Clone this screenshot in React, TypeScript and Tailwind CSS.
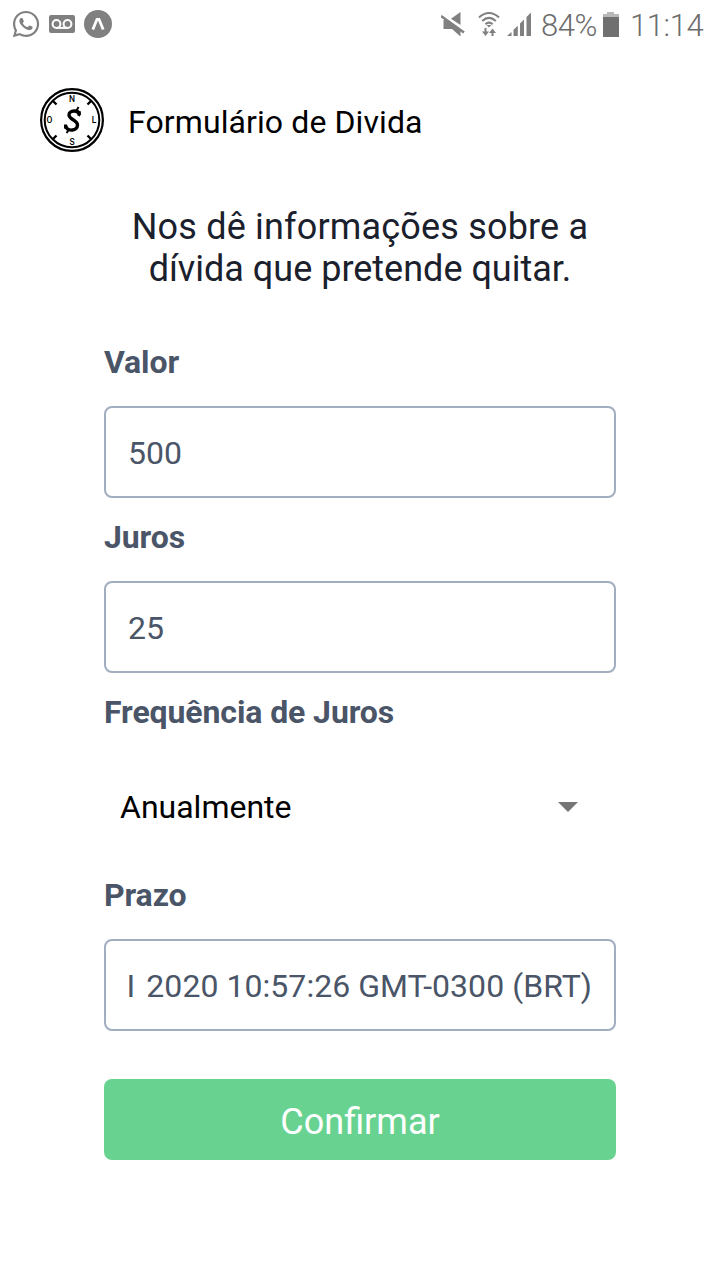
import React from "react";
import type { ReactNode } from "react";
import { FaWhatsapp } from "react-icons/fa";

function StatusBar() {
  return (
    <div className="flex h-12 items-center justify-between pl-[11px] pr-4 text-[#808080]">
      <div className="flex items-center gap-[9px]">
        <FaWhatsapp className="size-[30px]" />
        <svg className="-ml-px" width="26" height="18" viewBox="0 0 26 18" fill="none">
          <rect width="26" height="18" rx="2" fill="#808080" />
          <g stroke="#fff" strokeWidth="2">
            <circle cx="7.500" cy="9" r="3.900" />
            <circle cx="18.500" cy="9" r="3.900" />
            <path d="M7.500 12.900h11" />
          </g>
        </svg>
        <svg width="28" height="28" viewBox="0 0 28 28" fill="none">
          <circle cx="14" cy="14" r="14" fill="#808080" />
          <path d="M8.800 19.500 13 9.300h2L19.200 19.500" stroke="#fff" strokeWidth="2.800" />
        </svg>
      </div>
      <div className="flex items-center">
        <svg width="25" height="25" viewBox="0 0 25 25" fill="#808080">
          <path d="M19.500 0v13L10 6.800Z" />
          <path d="M2.500 8h4l13 9.500v7L11 17H2.500Z" />
          <path d="m0 4 23 16.500" stroke="#808080" strokeWidth="2.600" />
        </svg>
        <svg className="ml-[12px]" width="22" height="25" viewBox="0 0 22 25" fill="none" stroke="#808080" strokeWidth="2">
          <path d="M1 5.500Q11-3.500 21 5.500M4.200 9Q11 2.800 17.800 9M7.400 12.300Q11 9 14.600 12.300" />
          <path d="m8.500 13 2.500 2.500 2.500-2.500Z" fill="#808080" stroke="none" />
          <path d="M7.500 16v5M14.500 24v-5" />
          <path d="M4 19.500h7l-3.500 4.500ZM11 21h7l-3.500-4.500Z" fill="#808080" stroke="none" />
        </svg>
        <svg className="ml-[7px]" width="25" height="24" viewBox="0 0 25 24" fill="#808080">
          <path d="M0 24l4.500-4V24ZM6.500 17.800l4.300-4V24H6.500ZM13 11.500l4-4V24h-4ZM19.500 5l4.500-4.500V24h-4.500Z" />
        </svg>
        <span className="ml-[9px] w-[56px] whitespace-nowrap pt-0.5 text-[31px] font-light leading-none tracking-[-0.5px] text-[#6c6c6c]">84%</span>
        <svg className="ml-[6px]" width="16" height="25" viewBox="0 0 16 25">
          <path d="M0 2h4V0h7v2h5v4H0Z" fill="#b8b8b8" />
          <path d="M0 5h16v20H0Z" fill="#707070" />
        </svg>
        <span className="ml-[11px] w-[74px] whitespace-nowrap pt-0.5 text-[31px] font-light leading-none tracking-[-0.4px] text-[#6c6c6c]">11:14</span>
      </div>
    </div>
  );
}

function CompassLogo() {
  return (
    <svg width="64" height="64" viewBox="0 0 64 64" fill="none" stroke="#000">
      <circle cx="32" cy="32" r="30.900" strokeWidth="2.200" />
      <circle cx="32" cy="32" r="27.300" strokeWidth="2" />
      <path d="m12.500 12.500 4 4M51.500 12.500l-4 4M12.500 51.500l4-4M51.500 51.500l-4-4" strokeWidth="2.400" />
      <path d="M39.500 27C38.500 21.500 29 22 29 27c0 4.500 8.500 5 8.500 10 0 5.500-9.500 7.500-12 1" strokeWidth="3.400" />
      <path d="m36 23.500 2.500-4.500M29.500 41 26.500 45" strokeWidth="2" />
      <path d="m38 22.500 3 1-1 5-2.500-1ZM24 36.500l3 0 1 4.500-4-.500Z" fill="#000" stroke="none" />
      <g fill="#000" stroke="none" fontFamily="Roboto, sans-serif" fontSize="8.500" fontWeight="500" textAnchor="middle">
        <text x="32" y="14">N</text>
        <text x="9.500" y="35">O</text>
        <text x="54" y="35">L</text>
        <text x="32" y="57">S</text>
      </g>
    </svg>
  );
}

function Field({ label, children }: { label: string; children: ReactNode }) {
  return (
    <div>
      <div className="h-[38px] text-[32px] font-bold leading-[38px] tracking-[-0.1px]">{label}</div>
      <div className="mt-[25px] flex h-[92px] items-center rounded-lg border-2 border-[#a0aec0] px-[22px] pt-[2px] text-[32px]">
        {children}
      </div>
    </div>
  );
}

export default function App() {
  return (
    <div className="h-[1280px] overflow-hidden bg-white font-['Roboto',sans-serif]">
      <StatusBar />
      <header className="mt-10 flex h-16 items-center gap-6 pl-10 text-[32px] text-black">
        <CompassLogo />
        <h1 className="pt-1 tracking-[0.1px]">Formulário de Divida</h1>
      </header>
      <main className="mx-[104px] mt-[54px] text-[#4a5568]">
        <p className="text-center text-[36px] leading-[42px] text-[#1a202c]">
          <span className="tracking-[0.18px]">Nos dê informações sobre a</span>
          <br />
          dívida que pretende quitar.
        </p>
        <div className="mt-[53px] flex flex-col gap-[20px]">
          <Field label="Valor">500</Field>
          <Field label="Juros">25</Field>
        </div>
        <div className="mt-[20px] text-[32px] font-bold leading-[38px] tracking-[-0.1px]">Frequência de Juros</div>
        <div className="mt-[25px] flex h-[100px] items-center justify-between pl-4 pr-[38px] pt-[2px] text-[32px] text-black">
          <span>Anualmente</span>
          <svg width="20" height="10" viewBox="0 0 20 10">
            <path d="M0 0h20L10 10Z" fill="#757575" />
          </svg>
        </div>
        <div className="mt-[20px]">
          <Field label="Prazo">
            <div className="-ml-2 grow whitespace-nowrap text-right tracking-[0.05px]">
              <span className="mr-[3px]">I</span> 2020 10:57:26 GMT-0300 (BRT)
            </div>
          </Field>
        </div>
        <button className="mt-12 h-[81px] w-full rounded-lg bg-[#68d391] pt-[5px] text-[36px] text-white">
          Confirmar
        </button>
      </main>
    </div>
  );
}
